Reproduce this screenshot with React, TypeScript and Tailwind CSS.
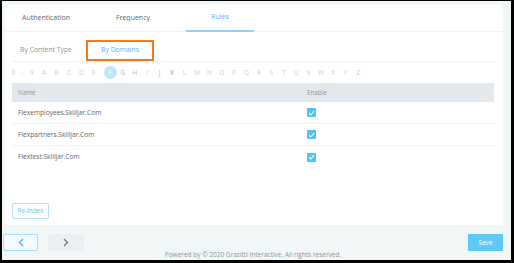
import React from "react";

const letters = "ABCDEFGHIJKLMNOPQRSTUVWXYZ".split("");
const rows = ["Flexemployees.Skilljar.Com", "Flexpartners.Skilljar.Com", "Flextest.Skilljar.Com"];

function Check() {
  return (
    <div className="w-[9px] h-[9px] bg-[#4fc3f7] rounded-[1px] flex items-center justify-center">
      <svg width="7" height="6" viewBox="0 0 7 6">
        <path d="M1 3.2 L2.8 5 L6 1.2" stroke="white" strokeWidth="1.1" fill="none" />
      </svg>
    </div>
  );
}

export default function App() {
  return (
    <div
      className="w-[514px] h-[263px] bg-[#f1f6f7] border-black border-t-[1px] border-l-[2px] border-r-[3px] border-b-[3px] pl-[1px] pt-[4px] flex flex-col"
      style={{ fontFamily: '"Open Sans", "Liberation Sans", sans-serif' }}
    >
      <div className="ml-[2px] w-[498px] h-[220px] bg-white rounded-[4px] flex flex-col">
        {/* Tabs */}
        <div className="h-[27px] border-b border-[#eef2f4] flex pl-[7px] gap-[19px]">
          <div className="w-[68px] flex items-center justify-center text-[7px] text-[#62676c]">Authentication</div>
          <div className="w-[68px] flex items-center justify-center text-[7px] text-[#62676c]">Frequency</div>
          <div className="w-[68px] flex items-center justify-center text-[7px] text-[#4bb8ee] border-b-2 border-[#8fd3f4] mb-[-1px]">Rules</div>
        </div>
        {/* Sub tabs */}
        <div className="mx-[7px] mr-[9px] pt-[8px] flex gap-[6px] border-b border-[#eef2f4]">
          <div className="w-[68px] h-[21px] flex items-center justify-center text-[6.8px] text-[#8f959a]">By Content Type</div>
          <div className="w-[68px] h-[21px] flex items-center justify-center text-[6.8px] text-[#4bb8ee] border-2 border-[#f47a20] mb-[-1px]">By Domains</div>
        </div>
        {/* Alphabet */}
        <div className="h-[21px] flex items-center ml-[4px] text-[6.3px] text-[#c8ccd0]">
          <div className="w-[9px] text-center">0</div>
          <div className="w-[9px] text-center">-</div>
          <div className="w-[9px] text-center">9</div>
          <div className="w-[2px]" />
          {letters.map((l) => (
            <div key={l} className={"w-[12.4px] flex items-center justify-center " + (l === "F" ? "ml-[4px]" : "")}>
              {l === "F" ? (
                <div className="w-[13px] h-[13px] shrink-0 rounded-full bg-[#bfe6fa] text-white flex items-center justify-center">F</div>
              ) : (
                <span className={l === "L" ? "text-[#8fcff0]" : l === "K" ? "text-[#9ea4a9]" : l === "G" || l === "H" || l === "J" ? "text-[#b4b9be]" : ""}>{l}</span>
              )}
            </div>
          ))}
        </div>
        {/* Table */}
        <div className="mx-[7px] mr-[9px]">
          <div className="h-[19px] bg-[#e3e8ec] flex items-center text-[6.3px] text-[#8f959a]">
            <div className="w-[288px] pl-[6px]">Name</div>
            <div className="pl-[7px]">Enable</div>
          </div>
          {rows.map((r, i) => (
            <div key={r} className={"h-[22px] flex items-center text-[6.6px] text-[#62676c] " + (i < 2 ? "border-b border-[#eef0f2]" : "")}>
              <div className="w-[288px] pl-[6px]">{r}</div>
              <div className="pl-[7px]"><Check /></div>
            </div>
          ))}
        </div>
        <div className="flex-1" />
        <div className="px-[7px] pb-[6px]">
          <div className="w-[37px] h-[16px] border border-[#b3e0f7] rounded-[2px] flex items-center justify-center text-[6.3px] text-[#6cc6f2]">Re-Index</div>
        </div>
      </div>
      {/* Footer */}
      <div className="w-[500px] mt-[9px] h-[17px] flex justify-between">
        <div className="flex gap-[10px]">
          <div className="w-[35px] h-[17px] border border-[#a9dcf6] bg-[#f4fafd] rounded-[2px] flex items-center justify-center">
            <svg width="6" height="9" viewBox="0 0 6 9">
              <path d="M5 1 L1.5 4.5 L5 8" stroke="#4bb6ee" strokeWidth="1.4" fill="none" />
            </svg>
          </div>
          <div className="w-[36px] h-[17px] bg-[#eceff1] rounded-[2px] flex items-center justify-center">
            <svg width="6" height="9" viewBox="0 0 6 9">
              <path d="M1 1 L4.5 4.5 L1 8" stroke="#6d7780" strokeWidth="1.4" fill="none" />
            </svg>
          </div>
        </div>
        <div className="w-[35px] h-[17px] bg-[#5ec8f6] rounded-[1px] flex items-center justify-center text-[6.5px] text-white">Save</div>
      </div>
      <div className="w-[500px] text-center text-[6.5px] leading-[8px] text-[#90969b]">
        Powered by © 2020 Grazitti Interactive. All rights reserved.
      </div>
    </div>
  );
}
